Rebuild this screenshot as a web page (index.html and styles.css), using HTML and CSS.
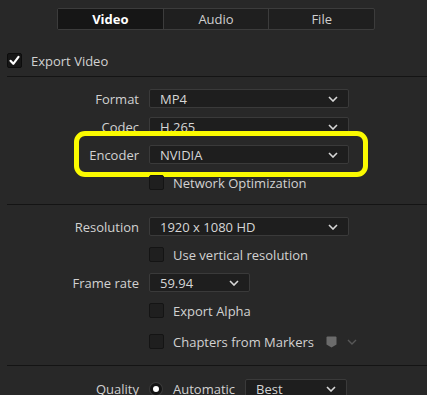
FILE: index.html
```html
<!DOCTYPE html>
<html>
<head>
<meta charset="utf-8">
<link rel="stylesheet" href="styles.css">
</head>
<body>
<div class="panel">
  <div class="tabs">
    <div class="tab active">Video</div>
    <div class="tab">Audio</div>
    <div class="tab">File</div>
  </div>
  <div class="export-row">
    <span class="cb checked"><svg viewBox="0 0 15 15" width="15" height="15"><path d="M3.5 7.8 L6.3 10.8 L11.5 3.8" fill="none" stroke="#fff" stroke-width="2.2" stroke-linecap="round" stroke-linejoin="round"/></svg></span>
    <span class="export-label">Export Video</span>
  </div>
  <div class="section s1">
    <div class="row"><span class="label">Format</span><div class="select w200"><span>MP4</span><svg class="chev" viewBox="0 0 10 6" width="10" height="6"><path d="M1 1 L5 5 L9 1" fill="none" stroke="#d8d8d8" stroke-width="1.6"/></svg></div></div>
    <div class="row"><span class="label">Codec</span><div class="select w200"><span>H.265</span><svg class="chev" viewBox="0 0 10 6" width="10" height="6"><path d="M1 1 L5 5 L9 1" fill="none" stroke="#d8d8d8" stroke-width="1.6"/></svg></div></div>
    <div class="row hl-wrap"><span class="label">Encoder</span><div class="select w200"><span>NVIDIA</span><svg class="chev" viewBox="0 0 10 6" width="10" height="6"><path d="M1 1 L5 5 L9 1" fill="none" stroke="#d8d8d8" stroke-width="1.6"/></svg></div><div class="highlight"></div></div>
    <div class="row"><span class="label"></span><div class="check"><span class="cb"></span><span>Network Optimization</span></div></div>
  </div>
  <div class="section s2">
    <div class="row"><span class="label">Resolution</span><div class="select w200"><span>1920 x 1080 HD</span><svg class="chev" viewBox="0 0 10 6" width="10" height="6"><path d="M1 1 L5 5 L9 1" fill="none" stroke="#d8d8d8" stroke-width="1.6"/></svg></div></div>
    <div class="row"><span class="label"></span><div class="check"><span class="cb"></span><span>Use vertical resolution</span></div></div>
    <div class="row"><span class="label">Frame rate</span><div class="select w101"><span>59.94</span><svg class="chev" viewBox="0 0 10 6" width="10" height="6"><path d="M1 1 L5 5 L9 1" fill="none" stroke="#d8d8d8" stroke-width="1.6"/></svg></div></div>
    <div class="row"><span class="label"></span><div class="check"><span class="cb"></span><span>Export Alpha</span></div></div>
    <div class="row chapters"><span class="label"></span><div class="check"><span class="cb"></span><span>Chapters from Markers</span>
      <svg class="marker" viewBox="0 0 11 12" width="11" height="12"><path d="M0.5 1.5 Q0.5 0.5 1.5 0.5 L9.5 0.5 Q10.5 0.5 10.5 1.5 L10.5 8.5 L5.5 11.5 L0.5 8.5 Z" fill="#6b6b6b"/></svg>
      <svg class="mchev" viewBox="0 0 10 6" width="10" height="6"><path d="M1 1 L5 5 L9 1" fill="none" stroke="#575757" stroke-width="1.4"/></svg>
    </div></div>
  </div>
  <div class="section s3">
    <div class="row"><span class="label">Quality</span><div class="quality"><span class="radio"></span><span class="auto">Automatic</span><div class="select w102"><span>Best</span><svg class="chev" viewBox="0 0 10 6" width="10" height="6"><path d="M1 1 L5 5 L9 1" fill="none" stroke="#d8d8d8" stroke-width="1.6"/></svg></div></div></div>
  </div>
</div>
</body>
</html>
```

FILE: styles.css
```css
html, body {
  margin: 0;
  padding: 0;
  background: #282828;
  overflow: hidden;
}
body {
  width: 427px;
  height: 395px;
  font-family: "Open Sans", "Noto Sans", sans-serif;
  font-size: 13px;
  color: #d2d2d2;
}
.panel {
  padding-top: 8px;
}
.tabs {
  display: flex;
  margin-left: 57px;
  width: 318px;
  height: 22px;
  box-sizing: border-box;
  border: 1px solid #3c3c3c;
  border-radius: 2px;
  background: #1f1f1f;
}
.tab {
  flex: 1;
  display: flex;
  align-items: center;
  justify-content: center;
  color: #cfcfcf;
  font-size: 13px;
  border-left: 1px solid #3c3c3c;
}
.tab:first-child {
  border-left: none;
}
.tab.active {
  background: #161616;
  color: #ffffff;
  font-weight: bold;
}
.export-row {
  display: flex;
  align-items: center;
  margin-top: 23px;
  margin-left: 7px;
  height: 15px;
  padding-bottom: 8px;
  border-bottom: 1px solid #141414;
}
.export-label {
  margin-left: 9px;
}
.cb {
  display: inline-block;
  width: 15px;
  height: 15px;
  box-sizing: border-box;
  background: #1f1f1f;
  border: 1px solid #141414;
  border-radius: 2px;
  flex: none;
}
.cb.checked {
  background: #161616;
  border-color: #0c0c0c;
}
.cb svg {
  display: block;
  margin: -1px;
}
.section {
  display: flex;
  flex-direction: column;
  gap: 9px;
  margin-left: 7px;
  border-bottom: 1px solid #141414;
}
.s1 {
  padding-top: 12px;
  padding-bottom: 12px;
}
.s2 {
  padding-top: 12px;
  padding-bottom: 14px;
}
.s3 {
  padding-top: 13px;
  border-bottom: none;
}
.row {
  display: flex;
  align-items: center;
  height: 19px;
  position: relative;
}
.row.chapters {
  margin-top: 3px;
}
.label {
  width: 132px;
  text-align: right;
  flex: none;
  margin-right: 10px;
}
.select {
  display: flex;
  align-items: center;
  justify-content: space-between;
  height: 19px;
  box-sizing: border-box;
  background: #1e1e1e;
  border: 1px solid #3a3a3a;
  border-radius: 2px;
  padding-left: 10px;
  padding-right: 10px;
  color: #d6d6d6;
}
.w200 { width: 200px; }
.w101 { width: 101px; }
.w102 { width: 102px; }
.chev {
  display: block;
}
.check {
  display: flex;
  align-items: center;
}
.check .cb {
  margin-right: 9px;
}
.marker {
  margin-left: 12px;
  display: block;
}
.mchev {
  margin-left: 10px;
  display: block;
}
.highlight {
  position: absolute;
  left: 67px;
  top: -14px;
  width: 294px;
  height: 46px;
  box-sizing: border-box;
  border: 5px solid #fafa00;
  border-radius: 11px;
  pointer-events: none;
}
.quality {
  display: flex;
  align-items: center;
}
.radio {
  width: 12px;
  height: 12px;
  box-sizing: border-box;
  border-radius: 50%;
  background: #ffffff;
  border: 3px solid #141414;
  box-shadow: 0 0 0 1px #3a3a3a;
  margin-left: 1px;
  margin-right: 11px;
}
.auto {
  margin-right: 10px;
}
```
